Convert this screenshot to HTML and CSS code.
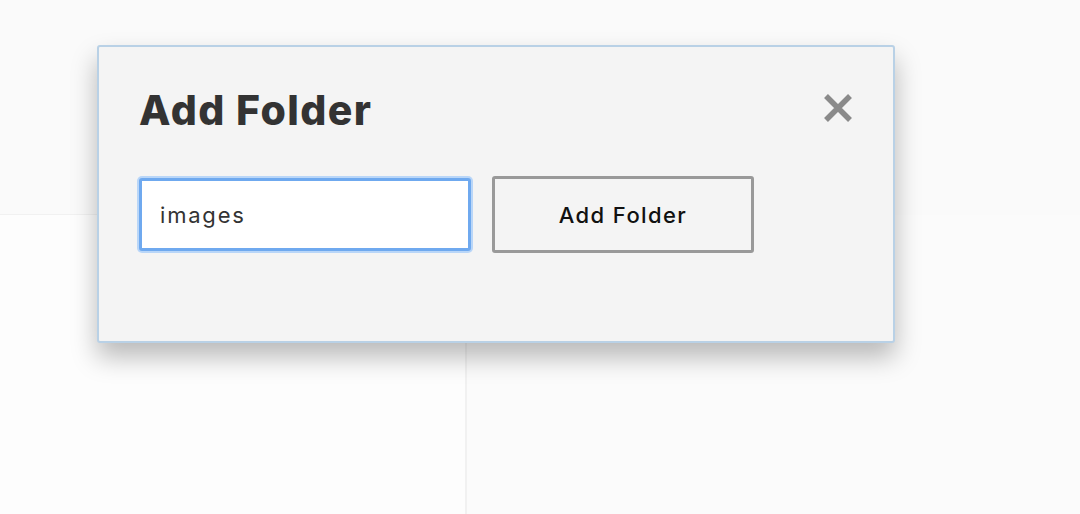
FILE: index.html
```html
<!DOCTYPE html>
<html lang="en">
<head>
<meta charset="utf-8">
<title>Add Folder</title>
<link rel="stylesheet" href="styles.css">
</head>
<body>
<div class="page">
  <div class="top"></div>
  <div class="bottom">
    <div class="left"></div>
    <div class="right"></div>
  </div>
</div>
<div class="dialog">
  <div class="dialog-head">
    <h1 class="title">Add Folder</h1>
    <button class="close" aria-label="Close">
      <svg width="30" height="30" viewBox="0 0 30 30"><path d="M3 3 L27 27 M27 3 L3 27" stroke="#8a8a8a" stroke-width="5.5" stroke-linecap="butt"/></svg>
    </button>
  </div>
  <div class="dialog-row">
    <input class="field" type="text" value="images">
    <button class="add-btn">Add Folder</button>
  </div>
</div>
</body>
</html>
```

FILE: styles.css
```css
* { box-sizing: border-box; }
html, body { margin: 0; height: 100%; }
body {
  font-family: Inter, "Open Sans", sans-serif;
  background: #fafafa;
  overflow: hidden;
}
.page {
  display: flex;
  flex-direction: column;
  height: 514px;
}
.top {
  height: 215px;
  background: #fafafa;
  border-bottom: 1px solid #f1f1f1;
  width: 468px;
}
.bottom {
  flex: 1;
  display: flex;
}
.left {
  width: 467px;
  background: #fdfdfd;
  border-right: 2px solid #f1f1f1;
}
.right {
  flex: 1;
  background: #fbfbfb;
}
.dialog {
  position: absolute;
  left: 97px;
  top: 45px;
  width: 798px;
  height: 298px;
  background: #f4f4f4;
  border: 2px solid #b9d1e6;
  border-radius: 3px;
  box-shadow: 0 14px 26px rgba(0,0,0,0.27);
  padding: 38px 40px 0 40px;
}
.dialog-head {
  display: flex;
  justify-content: space-between;
  align-items: flex-start;
  height: 91px;
}
.title {
  margin: 0;
  font-size: 41px;
  font-weight: 800;
  color: #333;
  line-height: 50px;
  letter-spacing: 1.4px;
}
.close {
  background: none;
  border: 0;
  padding: 0;
  margin: 8px 0 0 0;
  width: 30px;
  height: 30px;
  cursor: pointer;
}
.close svg { display: block; }
.dialog-row {
  display: flex;
  align-items: center;
  gap: 21px;
}
.field {
  width: 332px;
  height: 73px;
  border: 3px solid #6fa9ef;
  border-radius: 3px;
  box-shadow: 0 0 0 2px #b9d6f8;
  background: #fff;
  padding: 0 18px;
  font-family: inherit;
  font-size: 22px;
  letter-spacing: 1.8px;
  color: #333;
  outline: none;
}
.add-btn {
  width: 262px;
  height: 77px;
  border: 3px solid #999;
  border-radius: 3px;
  background: #f4f4f4;
  font-family: inherit;
  font-size: 22px;
  font-weight: 500;
  letter-spacing: 1.4px;
  color: #111;
  cursor: pointer;
}
```
